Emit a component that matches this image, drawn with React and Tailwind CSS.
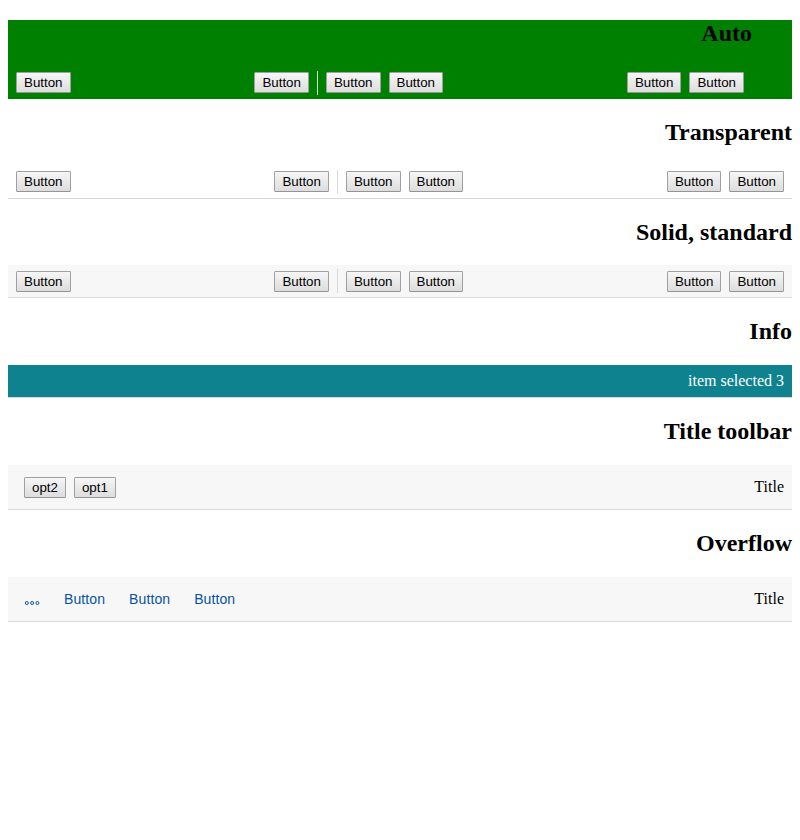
const btn =
  'h-[21px] shrink-0 rounded-[1.5px] border border-[#a0a0a0] border-b-[#949494] bg-linear-to-b from-[#f6f6f6] to-[#dddddd] px-[7px] font-["Liberation_Sans",Arial,sans-serif] text-[13.333px] leading-[19px] text-black';

function Btn({ children = 'Button' }) {
  return <button className={btn}>{children}</button>;
}

function Heading({ children, className = '' }) {
  return <h2 className={`text-right text-2xl leading-[27px] font-bold ${className}`}>{children}</h2>;
}

function Bar({ className, offset = 'pt-1.5', dividerOffset = '-mt-0.5' }) {
  return (
    <div className={`flex h-[33px] items-start justify-between border-b pl-2 ${offset} ${className}`}>
      <Btn />
      <div className="flex items-start gap-2">
        <Btn />
        <div className={`h-6 w-px bg-[#d9d9d9] ${dividerOffset}`} />
        <Btn />
        <Btn />
      </div>
      <div className="flex gap-2">
        <Btn />
        <Btn />
      </div>
    </div>
  );
}

function LinkBtn({ children = 'Button' }) {
  return (
    <button className='h-4 font-["Liberation_Sans",Arial,sans-serif] text-sm leading-4 tracking-[0.1px] text-[#0854a1]'>
      {children}
    </button>
  );
}

function OverflowIcon() {
  return (
    <svg className="mt-2 h-1.5 w-4" viewBox="0 0 16 6" fill="none" stroke="#0854a1">
      <circle cx="2.8" cy="3" r="1.5" />
      <circle cx="8.1" cy="3" r="1.5" />
      <circle cx="13.4" cy="3" r="1.5" />
    </svg>
  );
}

export default function App() {
  return (
    <div className='h-[840px] bg-white px-2 pt-5 font-["Liberation_Serif","Times_New_Roman",serif] text-base text-black'>
      <section className="h-[79px] bg-[#008000]">
        <Heading className="pr-10">Auto</Heading>
        <Bar className="mt-[19px] border-transparent pr-12" dividerOffset="-mt-px" />
      </section>
      <Heading className="mt-5">Transparent</Heading>
      <Bar className="mt-5 border-[#d9d9d9] pr-2" offset="pt-[5px]" dividerOffset="-mt-px" />
      <Heading className="mt-5">Solid, standard</Heading>
      <Bar className="mt-[19px] border-[#d9d9d9] bg-[#f7f7f7] pr-2" />
      <Heading className="mt-5">Info</Heading>
      <div className="mt-5 flex h-[33px] items-center justify-end border-b border-[#d9d9d9] bg-[#0f828f] pr-2 text-white">
        item selected 3
      </div>
      <Heading className="mt-5">Title toolbar</Heading>
      <div className="mt-5 flex h-[45px] items-center justify-between border-b border-[#d9d9d9] bg-[#f7f7f7] pr-2 pl-4">
        <div className="flex gap-2">
          <Btn>opt2</Btn>
          <Btn>opt1</Btn>
        </div>
        <span>Title</span>
      </div>
      <Heading className="mt-5">Overflow</Heading>
      <div className="mt-5 flex h-[45px] items-center justify-between border-b border-[#d9d9d9] bg-[#f7f7f7] pr-2 pl-4">
        <div className="flex items-center gap-6">
          <button aria-label="More">
            <OverflowIcon />
          </button>
          <LinkBtn />
          <LinkBtn />
          <LinkBtn />
        </div>
        <span>Title</span>
      </div>
    </div>
  );
}
